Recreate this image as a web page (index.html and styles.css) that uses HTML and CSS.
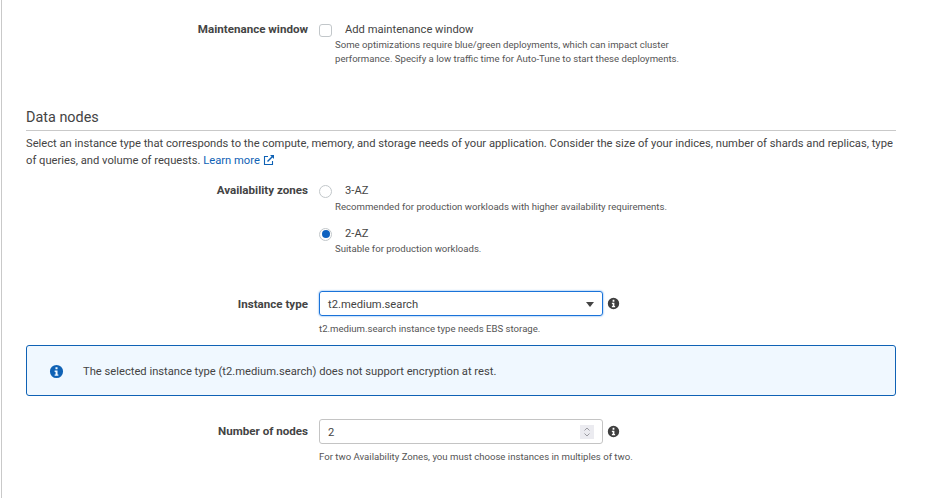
FILE: index.html
```html
<!DOCTYPE html>
<html lang="en">
<head>
    <meta charset="UTF-8">
    <title>Data nodes</title>
    <link rel="stylesheet" href="styles.css">
</head>
<body>
    <svg class="sprite" width="0" height="0">
        <symbol id="info" viewBox="0 0 16 16">
            <path fill-rule="evenodd" d="M8 1a7 7 0 1 1 0 14A7 7 0 0 1 8 1zM6.9 3.4v2.3h2.2V3.4zM6 7v1.5h1v2.6H6v1.5h4v-1.5H9.1V7z"/>
        </symbol>
    </svg>

    <div class="page">
        <div class="form-row maintenance-row">
            <div class="row-label">Maintenance window</div>
            <div class="row-control">
                <label class="option">
                    <span class="checkbox"></span>
                    <span class="option-text">Add maintenance window</span>
                </label>
                <p class="option-hint">Some optimizations require blue/green deployments, which can impact cluster<br>performance. Specify a low traffic time for Auto-Tune to start these deployments.</p>
            </div>
        </div>

        <h2 class="section-title">Data nodes</h2>
        <p class="section-desc">Select an instance type that corresponds to the compute, memory, and storage needs of your application. Consider the size of your indices, number of shards and replicas, type of queries, and volume of requests. <a class="link" href="#">Learn more <svg class="ext-icon" width="12" height="12" viewBox="0 0 12 12"><path d="M9.5 7v3.5h-8v-8H5" fill="none" stroke="currentColor" stroke-width="1.1"/><path d="M4.5 7.5L10 2" fill="none" stroke="currentColor" stroke-width="1.4"/><path d="M7 1h4v4z" fill="currentColor"/></svg></a></p>

        <div class="form-row zones-row">
            <div class="row-label">Availability zones</div>
            <div class="row-control">
                <label class="option">
                    <span class="radio"></span>
                    <span class="option-text">3-AZ</span>
                </label>
                <p class="option-hint">Recommended for production workloads with higher availability requirements.</p>
                <label class="option option-next">
                    <span class="radio radio-on"></span>
                    <span class="option-text">2-AZ</span>
                </label>
                <p class="option-hint">Suitable for production workloads.</p>
            </div>
        </div>

        <div class="form-row instance-row">
            <div class="row-label field-label">Instance type</div>
            <div class="row-control">
                <div class="field-line">
                    <div class="field field-focus">
                        <span>t2.medium.search</span>
                        <span class="caret"></span>
                    </div>
                    <svg class="info-icon" width="13" height="13"><use href="#info"/></svg>
                </div>
                <p class="field-hint">t2.medium.search instance type needs EBS storage.</p>
            </div>
        </div>

        <div class="alert">
            <svg class="alert-icon" width="15" height="15"><use href="#info"/></svg>
            <span>The selected instance type (t2.medium.search) does not support encryption at rest.</span>
        </div>

        <div class="form-row nodes-row">
            <div class="row-label field-label">Number of nodes</div>
            <div class="row-control">
                <div class="field-line">
                    <div class="field">
                        <span>2</span>
                        <span class="spinner">
                            <svg width="14" height="14" viewBox="0 0 14 14"><path d="M4.5 5.5L7 3l2.5 2.5M4.5 8.5L7 11l2.5-2.5" fill="none" stroke="#9a9aa0" stroke-width="1"/></svg>
                        </span>
                    </div>
                    <svg class="info-icon" width="13" height="13"><use href="#info"/></svg>
                </div>
                <p class="field-hint">For two Availability Zones, you must choose instances in multiples of two.</p>
            </div>
        </div>
    </div>
</body>
</html>
```

FILE: styles.css
```css
/* Global Styles */
body {
    font-family: 'Roboto', sans-serif;
    font-size: 11.2px;
    color: #444;
    background-color: #fff;
    margin: 0;
    height: 498px;
    overflow: hidden;
}

.sprite {
    position: absolute;
}

.page {
    box-sizing: border-box;
    width: 895px;
    height: 498px;
    margin-left: 1px;
    padding: 23px 0 0 24px;
    border-left: 1px solid #c9c9c9;
}

p {
    margin: 0;
}

/* Form rows */
.form-row {
    display: grid;
    grid-template-columns: 282px 1fr;
    column-gap: 11px;
}

.row-label {
    font-size: 11.6px;
    font-weight: 700;
    text-align: right;
    line-height: 13px;
}

.field-label {
    line-height: 27px;
}

.nodes-row .field-label {
    line-height: 25px;
}

.option {
    display: flex;
    align-items: center;
    height: 14px;
    line-height: 14px;
}

.option-next {
    margin-top: 13px;
}

.option-next + .option-hint {
    margin-top: 1px;
}

.maintenance-row .option-hint {
    margin-top: 1px;
}

.option-text {
    margin-left: 13px;
}

.option-hint {
    margin-left: 16px;
    margin-top: 2px;
    font-size: 9.6px;
    line-height: 14px;
    color: #555;
}

.checkbox {
    box-sizing: border-box;
    width: 13px;
    height: 13px;
    border: 1px solid #c2c7ca;
    border-radius: 3px;
}

.radio {
    box-sizing: border-box;
    display: flex;
    align-items: center;
    justify-content: center;
    width: 13px;
    height: 13px;
    border: 1px solid #c2c7ca;
    border-radius: 50%;
}

.radio-on::after {
    content: "";
    width: 8px;
    height: 8px;
    border-radius: 50%;
    background-color: #0f62c0;
}

/* Section header */
.section-title {
    margin: 43px 0 0;
    padding-bottom: 4px;
    font-size: 14.4px;
    font-weight: 400;
    line-height: 17px;
    border-bottom: 1px solid #c9c9c9;
}

.section-desc {
    margin-top: 4px;
    line-height: 17px;
}

.link {
    color: #0f62b5;
    text-decoration: none;
}

.ext-icon {
    vertical-align: -2px;
}

.zones-row {
    margin-top: 15px;
}

.instance-row {
    margin-top: 35px;
}

/* Inputs */
.field-line {
    display: flex;
    align-items: center;
    width: 301px;
}

.field {
    box-sizing: border-box;
    flex: none;
    display: flex;
    align-items: center;
    justify-content: space-between;
    width: 284px;
    height: 25px;
    padding: 1px 8px 0 8px;
    border: 1px solid #c4c4c4;
    border-radius: 3px;
    font-size: 11.2px;
}

.field-focus {
    border-color: #1a73d9;
    box-shadow: 0 0 2px #4a95e8;
}

.caret {
    width: 0;
    height: 0;
    border-left: 4.5px solid transparent;
    border-right: 4.5px solid transparent;
    border-top: 5px solid #444;
}

.spinner {
    display: flex;
    align-items: center;
    justify-content: center;
    width: 14px;
    height: 14px;
    background-color: #ebebf0;
}

.info-icon {
    flex: none;
    margin-left: 4px;
    fill: #3f3f3f;
}

.field-hint {
    margin-top: 6px;
    font-size: 9.6px;
    line-height: 14px;
    color: #555;
}

/* Alert */
.alert {
    box-sizing: border-box;
    display: flex;
    align-items: center;
    height: 51px;
    margin-top: 9px;
    padding: 1px 0 0 22px;
    background-color: #f0f8ff;
    border: 1px solid #0f62b5;
    border-radius: 3px;
}

.alert-icon {
    flex: none;
    margin-right: 19px;
    fill: #0f62b5;
}

.nodes-row {
    margin-top: 23px;
}
```
